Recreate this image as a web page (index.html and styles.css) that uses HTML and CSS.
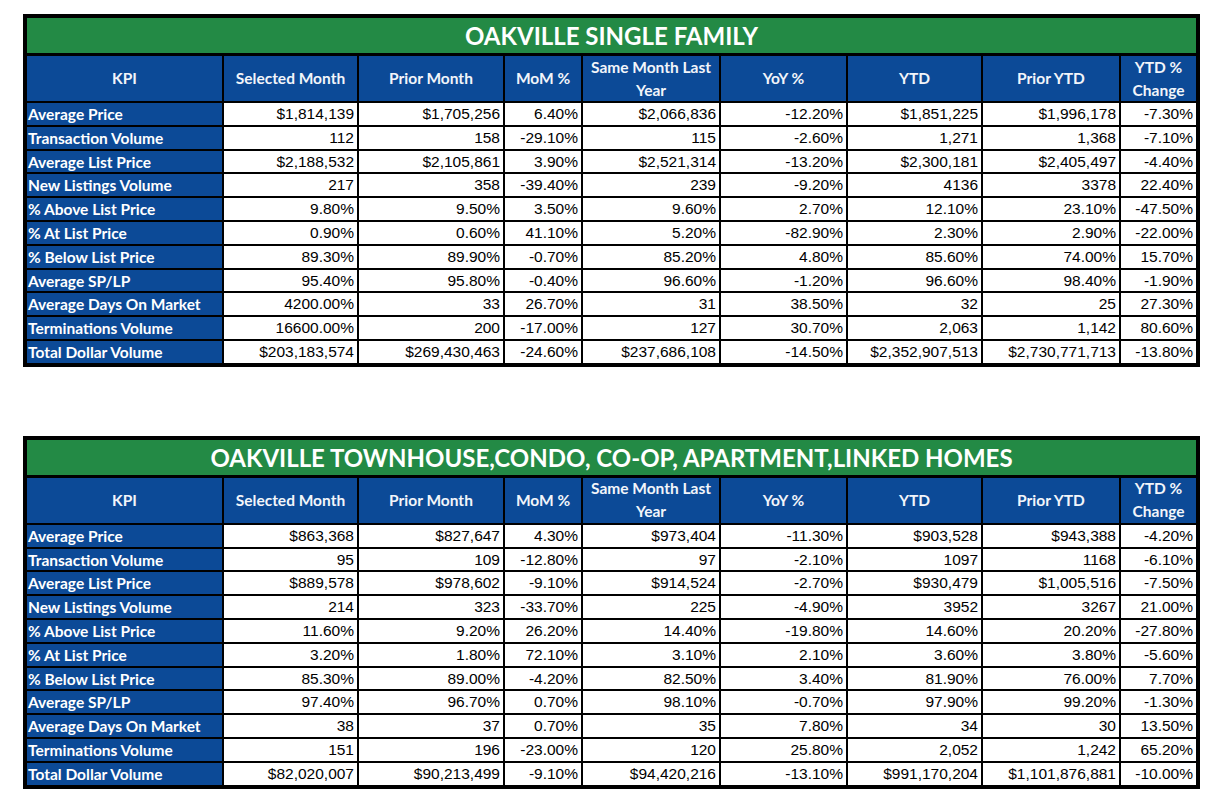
FILE: index.html
```html
<!DOCTYPE html>
<html lang="en">
<head>
<meta charset="utf-8">
<title>Oakville KPI</title>
<link rel="stylesheet" href="styles.css">
</head>
<body>
<div class="page">
  <div class="sheet">
    <div class="title">OAKVILLE SINGLE FAMILY</div>
    <div class="h">KPI</div><div class="h">Selected Month</div><div class="h">Prior Month</div><div class="h">MoM %</div><div class="h">Same Month Last Year</div><div class="h">YoY %</div><div class="h">YTD</div><div class="h">Prior YTD</div><div class="h">YTD % Change</div>
    <div class="k">Average Price</div><div class="v">$1,814,139</div><div class="v">$1,705,256</div><div class="v">6.40%</div><div class="v">$2,066,836</div><div class="v">-12.20%</div><div class="v">$1,851,225</div><div class="v">$1,996,178</div><div class="v">-7.30%</div>
    <div class="k">Transaction Volume</div><div class="v">112</div><div class="v">158</div><div class="v">-29.10%</div><div class="v">115</div><div class="v">-2.60%</div><div class="v">1,271</div><div class="v">1,368</div><div class="v">-7.10%</div>
    <div class="k">Average List Price</div><div class="v">$2,188,532</div><div class="v">$2,105,861</div><div class="v">3.90%</div><div class="v">$2,521,314</div><div class="v">-13.20%</div><div class="v">$2,300,181</div><div class="v">$2,405,497</div><div class="v">-4.40%</div>
    <div class="k">New Listings Volume</div><div class="v">217</div><div class="v">358</div><div class="v">-39.40%</div><div class="v">239</div><div class="v">-9.20%</div><div class="v">4136</div><div class="v">3378</div><div class="v">22.40%</div>
    <div class="k">% Above List Price</div><div class="v">9.80%</div><div class="v">9.50%</div><div class="v">3.50%</div><div class="v">9.60%</div><div class="v">2.70%</div><div class="v">12.10%</div><div class="v">23.10%</div><div class="v">-47.50%</div>
    <div class="k">% At List Price</div><div class="v">0.90%</div><div class="v">0.60%</div><div class="v">41.10%</div><div class="v">5.20%</div><div class="v">-82.90%</div><div class="v">2.30%</div><div class="v">2.90%</div><div class="v">-22.00%</div>
    <div class="k">% Below List Price</div><div class="v">89.30%</div><div class="v">89.90%</div><div class="v">-0.70%</div><div class="v">85.20%</div><div class="v">4.80%</div><div class="v">85.60%</div><div class="v">74.00%</div><div class="v">15.70%</div>
    <div class="k">Average SP/LP</div><div class="v">95.40%</div><div class="v">95.80%</div><div class="v">-0.40%</div><div class="v">96.60%</div><div class="v">-1.20%</div><div class="v">96.60%</div><div class="v">98.40%</div><div class="v">-1.90%</div>
    <div class="k">Average Days On Market</div><div class="v">4200.00%</div><div class="v">33</div><div class="v">26.70%</div><div class="v">31</div><div class="v">38.50%</div><div class="v">32</div><div class="v">25</div><div class="v">27.30%</div>
    <div class="k">Terminations Volume</div><div class="v">16600.00%</div><div class="v">200</div><div class="v">-17.00%</div><div class="v">127</div><div class="v">30.70%</div><div class="v">2,063</div><div class="v">1,142</div><div class="v">80.60%</div>
    <div class="k">Total Dollar Volume</div><div class="v">$203,183,574</div><div class="v">$269,430,463</div><div class="v">-24.60%</div><div class="v">$237,686,108</div><div class="v">-14.50%</div><div class="v">$2,352,907,513</div><div class="v">$2,730,771,713</div><div class="v">-13.80%</div>
  </div>

  <div class="sheet">
    <div class="title">OAKVILLE TOWNHOUSE,CONDO, CO-OP, APARTMENT,LINKED HOMES</div>
    <div class="h">KPI</div><div class="h">Selected Month</div><div class="h">Prior Month</div><div class="h">MoM %</div><div class="h">Same Month Last Year</div><div class="h">YoY %</div><div class="h">YTD</div><div class="h">Prior YTD</div><div class="h">YTD % Change</div>
    <div class="k">Average Price</div><div class="v">$863,368</div><div class="v">$827,647</div><div class="v">4.30%</div><div class="v">$973,404</div><div class="v">-11.30%</div><div class="v">$903,528</div><div class="v">$943,388</div><div class="v">-4.20%</div>
    <div class="k">Transaction Volume</div><div class="v">95</div><div class="v">109</div><div class="v">-12.80%</div><div class="v">97</div><div class="v">-2.10%</div><div class="v">1097</div><div class="v">1168</div><div class="v">-6.10%</div>
    <div class="k">Average List Price</div><div class="v">$889,578</div><div class="v">$978,602</div><div class="v">-9.10%</div><div class="v">$914,524</div><div class="v">-2.70%</div><div class="v">$930,479</div><div class="v">$1,005,516</div><div class="v">-7.50%</div>
    <div class="k">New Listings Volume</div><div class="v">214</div><div class="v">323</div><div class="v">-33.70%</div><div class="v">225</div><div class="v">-4.90%</div><div class="v">3952</div><div class="v">3267</div><div class="v">21.00%</div>
    <div class="k">% Above List Price</div><div class="v">11.60%</div><div class="v">9.20%</div><div class="v">26.20%</div><div class="v">14.40%</div><div class="v">-19.80%</div><div class="v">14.60%</div><div class="v">20.20%</div><div class="v">-27.80%</div>
    <div class="k">% At List Price</div><div class="v">3.20%</div><div class="v">1.80%</div><div class="v">72.10%</div><div class="v">3.10%</div><div class="v">2.10%</div><div class="v">3.60%</div><div class="v">3.80%</div><div class="v">-5.60%</div>
    <div class="k">% Below List Price</div><div class="v">85.30%</div><div class="v">89.00%</div><div class="v">-4.20%</div><div class="v">82.50%</div><div class="v">3.40%</div><div class="v">81.90%</div><div class="v">76.00%</div><div class="v">7.70%</div>
    <div class="k">Average SP/LP</div><div class="v">97.40%</div><div class="v">96.70%</div><div class="v">0.70%</div><div class="v">98.10%</div><div class="v">-0.70%</div><div class="v">97.90%</div><div class="v">99.20%</div><div class="v">-1.30%</div>
    <div class="k">Average Days On Market</div><div class="v">38</div><div class="v">37</div><div class="v">0.70%</div><div class="v">35</div><div class="v">7.80%</div><div class="v">34</div><div class="v">30</div><div class="v">13.50%</div>
    <div class="k">Terminations Volume</div><div class="v">151</div><div class="v">196</div><div class="v">-23.00%</div><div class="v">120</div><div class="v">25.80%</div><div class="v">2,052</div><div class="v">1,242</div><div class="v">65.20%</div>
    <div class="k">Total Dollar Volume</div><div class="v">$82,020,007</div><div class="v">$90,213,499</div><div class="v">-9.10%</div><div class="v">$94,420,216</div><div class="v">-13.10%</div><div class="v">$991,170,204</div><div class="v">$1,101,876,881</div><div class="v">-10.00%</div>
  </div>
</div>
</body>
</html>
```

FILE: styles.css
```css
html, body {
  margin: 0;
  padding: 0;
  background: #ffffff;
}

.page {
  padding: 14px 0 0 23px;
  display: flex;
  flex-direction: column;
  gap: 69px;
}

.sheet {
  width: 1169px;
  display: grid;
  grid-template-columns: 195px 133px 144px 76px 136px 125px 133px 136px 75px;
  grid-template-rows: 36px 45px repeat(11, 21.8px);
  gap: 2px;
  padding: 4px;
  background: #000000;
}

.title {
  grid-column: 1 / -1;
  margin-bottom: 1px;
  background: #238a45;
  color: #ffffff;
  font-family: Lato, "Noto Sans", sans-serif;
  font-weight: 700;
  font-size: 24px;
  line-height: 36px;
  text-align: center;
  white-space: nowrap;
}

.h {
  background: #0c4a97;
  color: #f2f5fa;
  font-family: Lato, "Noto Sans", sans-serif;
  font-weight: 700;
  font-size: 15.5px;
  line-height: 23px;
  display: flex;
  align-items: center;
  justify-content: center;
  text-align: center;
  padding: 0 4px;
}

.k {
  background: #0c4a97;
  color: #ffffff;
  font-family: Lato, "Noto Sans", sans-serif;
  font-weight: 700;
  font-size: 15.5px;
  line-height: 22px;
  padding-left: 1px;
  white-space: nowrap;
}

.v {
  background: #ffffff;
  color: #000000;
  font-family: "Liberation Sans", Arial, sans-serif;
  font-size: 15.5px;
  line-height: 22px;
  text-align: right;
  padding-right: 3px;
  white-space: nowrap;
}
```
